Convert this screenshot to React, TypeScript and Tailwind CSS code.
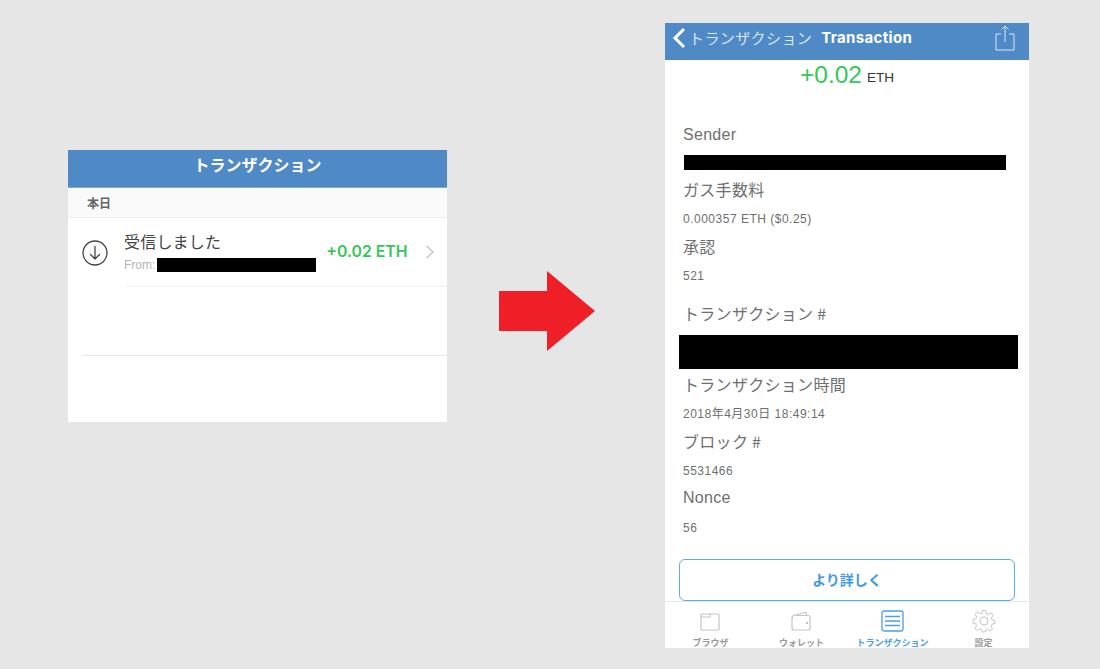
const font = { fontFamily: '"Noto Sans CJK JP", "Liberation Sans", sans-serif' };

function Label({ children, className = "" }: { children: React.ReactNode; className?: string }) {
  return <div className={`h-[30px] leading-[28px] text-[16px] tracking-[0.3px] text-[#6f6f6f] ${className}`}>{children}</div>;
}
function Value({ children }: { children: React.ReactNode }) {
  return <div className="h-[27px] leading-[28px] text-[12px] tracking-[0.5px] text-[#6f6f6f] font-['Liberation_Sans','Noto_Sans_CJK_JP',sans-serif]">{children}</div>;
}

function Tab({ label, active, icon }: { label: string; active?: boolean; icon: React.ReactNode }) {
  return (
    <div className="flex-1 flex flex-col items-center min-w-0 pt-[7px]">
      <div className="h-[24px] flex items-center justify-center">{icon}</div>
      <div className={`mt-[5px] text-[9px] leading-[10px] font-bold whitespace-nowrap ${active ? "text-[#4a9fe8]" : "text-[#9a9a9a]"}`}>{label}</div>
    </div>
  );
}

export default function App() {
  return (
    <div className="w-[1100px] h-[669px] overflow-hidden bg-[#e6e6e6] flex items-start" style={font}>
      {/* Left panel */}
      <div className="ml-[68px] mt-[150px] w-[379px] h-[272px] bg-white flex flex-col shrink-0">
        <div className="h-[38px] bg-[#4f8ac6] text-white text-[16px] font-bold flex items-center justify-center border-b border-[#7fa8d3] pb-[9px]">トランザクション</div>
        <div className="h-[30px] bg-[#fafafa] border-b border-[#efefef] pl-[19px] text-[12px] font-bold text-[#666] flex items-center">本日</div>
        <div className="h-[68px] flex">
          <div className="w-[56px] shrink-0 pl-[14px] pt-[22px]">
            <svg width="26" height="26" viewBox="0 0 26 26" fill="none" stroke="#444" strokeWidth="1.3">
              <circle cx="13" cy="13" r="12" />
              <path d="M13 6.500V19M8.500 14.500L13 19L17.500 14.500" strokeLinecap="round" strokeLinejoin="round" />
            </svg>
          </div>
          <div className="flex-1 min-w-0">
            <div className="text-[16px] leading-[20px] tracking-[0.2px] text-[#444] mt-[13px]">受信しました</div>
            <div className="flex items-center mt-[7px]">
              <span className="text-[12px] leading-[14px] text-[#b5b5b5] font-['Liberation_Sans',sans-serif]">From:</span>
              <div className="w-[159px] h-[14px] bg-black ml-[2px]" />
              <span className="ml-[10px] -mt-[26px] text-[15.8px] leading-[20px] font-semibold text-[#34c759] whitespace-nowrap font-['Inter',sans-serif]">+0.02 ETH</span>
              <svg className="ml-[17px] -mt-[26px]" width="10" height="14" viewBox="0 0 10 14" fill="none" stroke="#c8c8c8" strokeWidth="1.5"><path d="M1.500 1L8 7L1.500 13" /></svg>
            </div>
          </div>
        </div>
        <div className="ml-[58px] border-t border-[#efefef] h-[69px]" />
        <div className="ml-[14px] border-t border-[#e6e6e6]" />
      </div>

      {/* Arrow */}
      <svg className="ml-[52px] mt-[271px] shrink-0" width="96" height="80" viewBox="0 0 96 80">
        <path d="M0 20H48V0L96 40L48 80V60H0Z" fill="#ee1f26" />
      </svg>

      {/* Right panel */}
      <div className="ml-[70px] mt-[23px] w-[364px] h-[625px] bg-white flex flex-col overflow-hidden shrink-0">
        <div className="h-[37px] shrink-0 bg-[#4f8ac6] flex items-start pl-[7px] pr-[13px]">
          <svg className="mt-[4px]" width="14" height="22" viewBox="0 0 14 22" fill="none" stroke="white" strokeWidth="3"><path d="M12 2L3 11L12 20" /></svg>
          <span className="ml-[3px] mt-[3px] text-[15px] leading-[24px] text-[#dbe7f4] tracking-[0.4px] whitespace-nowrap">トランザクション</span>
          <span className="ml-[9px] mt-[3px] text-[15px] leading-[24px] tracking-[0.35px] font-bold text-white font-['Inter',sans-serif]">Transaction</span>
          <svg className="ml-auto mt-[2px]" width="22" height="26" viewBox="0 0 22 26" fill="none" stroke="#dbe7f4" strokeWidth="1"><path d="M7 9H2V25H20V9H15M11 17V1M7.500 4.500L11 1L14.500 4.500" /></svg>
        </div>
        <div className="h-[30px] shrink-0 flex items-center justify-center font-['Liberation_Sans',sans-serif]">
          <span className="text-[24.5px] text-[#34c759]">+0.02</span>
          <span className="ml-[5px] mt-[6px] text-[13.5px] text-[#333]">ETH</span>
        </div>
        <div className="flex-1 pl-[18px] pr-[14px] pt-[31px]">
          <Label className="font-['Liberation_Sans',sans-serif]">Sender</Label>
          <div className="h-[15px] w-[322px] bg-black ml-[1px] mt-[4px]" />
          <div className="h-[5px]" />
          <Label>ガス手数料</Label>
          <Value>0.000357 ETH ($0.25)</Value>
          <Label>承認</Label>
          <Value>521</Value>
          <Label className="mt-[10px]">トランザクション #</Label>
          <div className="h-[34px] w-[339px] bg-black -ml-[4px] mt-[6px]" />
          <div className="h-[1px]" />
          <Label>トランザクション時間</Label>
          <Value>2018年4月30日 18:49:14</Value>
          <Label>ブロック #</Label>
          <Value>5531466</Value>
          <Label className="font-['Liberation_Sans',sans-serif]">Nonce</Label>
          <Value>56</Value>
          <div className="-ml-[4px] mt-[18px] w-[336px] h-[42px] border border-[#5aade8] rounded-[6px] flex items-center justify-center text-[14px] font-bold text-[#3f9ae0] pb-[2px]">より詳しく</div>
        </div>
        <div className="h-[47px] shrink-0 border-t border-[#e8e8e8] flex overflow-hidden">
          <Tab label="ブラウザ" icon={<svg className="mt-[1px] -ml-[2px]" width="20" height="18" viewBox="0 0 20 18" fill="none" stroke="#c4c4c4" strokeWidth="1.200"><rect x="1" y="1" width="18" height="16" rx="1" /><path d="M1 4H10V1" /></svg>} />
          <Tab label="ウォレット" icon={<svg className="-ml-[2px] -mt-[1px]" width="20" height="20" viewBox="0 0 20 20" fill="none" stroke="#c4c4c4" strokeWidth="1.200"><path d="M1 7C1 5 2 4.500 4 4L14 1.500C15 1.300 15.500 2 15.500 3V4.500M1 7V17C1 18 2 19 3 19H17C18 19 19 18 19 17V6C19 5 18 4.500 17 4.500H5" /><circle cx="16" cy="12" r="0.600" fill="#c4c4c4" /></svg>} />
          <Tab active label="トランザクション" icon={<svg width="23" height="22" viewBox="0 0 23 22" fill="none" stroke="#4a9fe8" strokeWidth="1.300"><rect x="1" y="1" width="21" height="20" rx="2" /><path d="M4 6.500H19M4 11H19M4 15.500H19" /></svg>} />
          <Tab label="設定" icon={<svg width="24" height="24" viewBox="0 0 24 24" fill="none" stroke="#c4c4c4" strokeWidth="1"><circle cx="12" cy="12" r="4" /><path d="M10.300 1.500H13.700L14.300 4.700L16.500 5.600L19.200 3.800L21.200 6.300L19.400 8.900L20.200 11L23 11.800V12.200L22.800 14.500L20 15.200L19 17.300L20.500 20L18 22L15.700 20.200L13.700 21L13 23H10.500L10 20.500L8 19.800L5.500 21.500L3 19.500L4.500 16.800L3.700 14.800L1 14V10.500L3.800 9.800L4.700 7.700L3 5.200L5.500 3L8 4.700L9.900 4Z" strokeLinejoin="round" /></svg>} />
        </div>
      </div>
    </div>
  );
}
